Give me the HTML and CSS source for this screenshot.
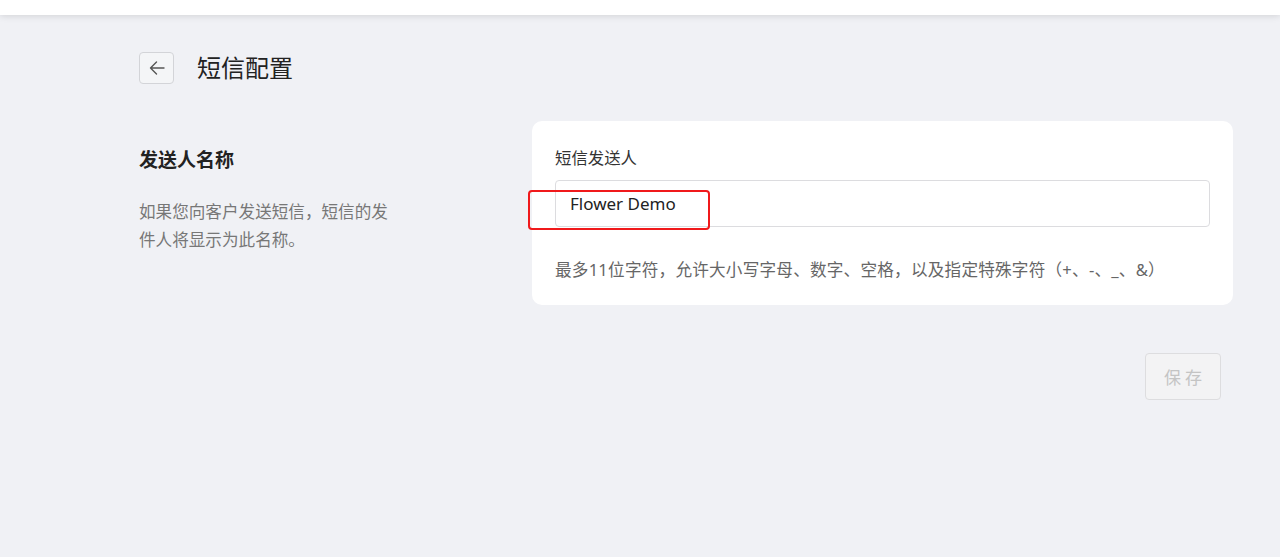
FILE: index.html
```html
<!DOCTYPE html>
<html lang="zh-CN">
<head>
    <meta charset="UTF-8">
    <title>短信配置</title>
    <link rel="stylesheet" href="styles.css">
</head>
<body>
    <div class="topbar"></div>
    <div class="page">
        <div class="page-title">
            <button class="back-btn">
                <svg width="18" height="18" viewBox="0 0 18 18" fill="none" stroke="#555" stroke-width="1.4" stroke-linecap="round" stroke-linejoin="round">
                    <path d="M16 9H2.5M8.5 3L2.5 9l6 6"/>
                </svg>
            </button>
            <h1>短信配置</h1>
        </div>
        <div class="section">
            <div class="section-info">
                <h2>发送人名称</h2>
                <p>如果您向客户发送短信，短信的发件人将显示为此名称。</p>
            </div>
            <div class="card">
                <label class="field-label">短信发送人</label>
                <div class="input-wrap">
                    <input type="text" class="text-input" value="Flower Demo">
                    <div class="highlight"></div>
                </div>
                <p class="hint">最多11位字符，允许大小写字母、数字、空格，以及指定特殊字符（+、-、_、&amp;）</p>
            </div>
        </div>
        <div class="actions">
            <button class="save-btn" disabled>保 存</button>
        </div>
    </div>
</body>
</html>
```
FILE: styles.css
```css
body {
    margin: 0;
    background-color: #f0f1f5;
    font-family: "Noto Sans", "Noto Sans CJK SC", sans-serif;
    color: #222;
    height: 557px;
    overflow: hidden;
    text-spacing-trim: space-all;
}
.topbar {
    height: 15px;
    background-color: #fff;
    box-shadow: 0 1px 7px rgba(0, 0, 0, 0.13);
    position: relative;
}
.page {
    padding: 37px 47px 0 139px;
}
.page-title {
    display: flex;
    align-items: center;
    height: 32px;
}
.back-btn {
    width: 35px;
    height: 32px;
    border: 1px solid #d3d4d8;
    border-radius: 4px;
    background-color: #f4f5f7;
    display: flex;
    align-items: center;
    justify-content: center;
    padding: 0;
    margin-right: 23px;
}
.page-title h1 {
    margin: 0;
    font-size: 24px;
    font-weight: 400;
    color: #222;
    line-height: 32px;
}
.section {
    display: flex;
    margin-top: 37px;
}
.section-info {
    width: 393px;
    flex-shrink: 0;
}
.section-info h2 {
    margin: 26px 0 0;
    font-size: 19px;
    font-weight: 700;
    line-height: 26px;
    color: #222;
}
.section-info p {
    width: 258px;
    margin: 25px 0 0;
    font-size: 16.6px;
    line-height: 28px;
    color: #777;
}
.card {
    flex: 1;
    background-color: #fff;
    border-radius: 10px;
    padding: 25px 23px 23px;
}
.field-label {
    display: block;
    font-size: 16.4px;
    line-height: 24px;
    color: #333;
}
.input-wrap {
    position: relative;
    margin-top: 10px;
}
.text-input {
    display: block;
    box-sizing: border-box;
    width: 100%;
    height: 47px;
    border: 1px solid #dcdcdf;
    border-radius: 4px;
    padding: 0 14px;
    font-family: "Noto Sans", "Noto Sans CJK SC", sans-serif;
    font-size: 17px;
    color: #222;
    background-color: #fff;
}
.highlight {
    position: absolute;
    left: -27px;
    top: 10px;
    width: 182px;
    height: 40px;
    box-sizing: border-box;
    border: 2px solid #f0191b;
    border-radius: 4px;
}
.hint {
    margin: 31px 0 0;
    font-size: 16.6px;
    letter-spacing: 0.23px;
    line-height: 24px;
    color: #666;
}
.actions {
    display: flex;
    justify-content: flex-end;
    margin-top: 48px;
    padding-right: 12px;
}
.save-btn {
    width: 76px;
    height: 47px;
    border: 1px solid #dddddf;
    border-radius: 4px;
    background-color: #f3f3f4;
    color: #c4c4c4;
    font-family: "Noto Sans CJK SC", sans-serif;
    font-size: 17px;
}
```
